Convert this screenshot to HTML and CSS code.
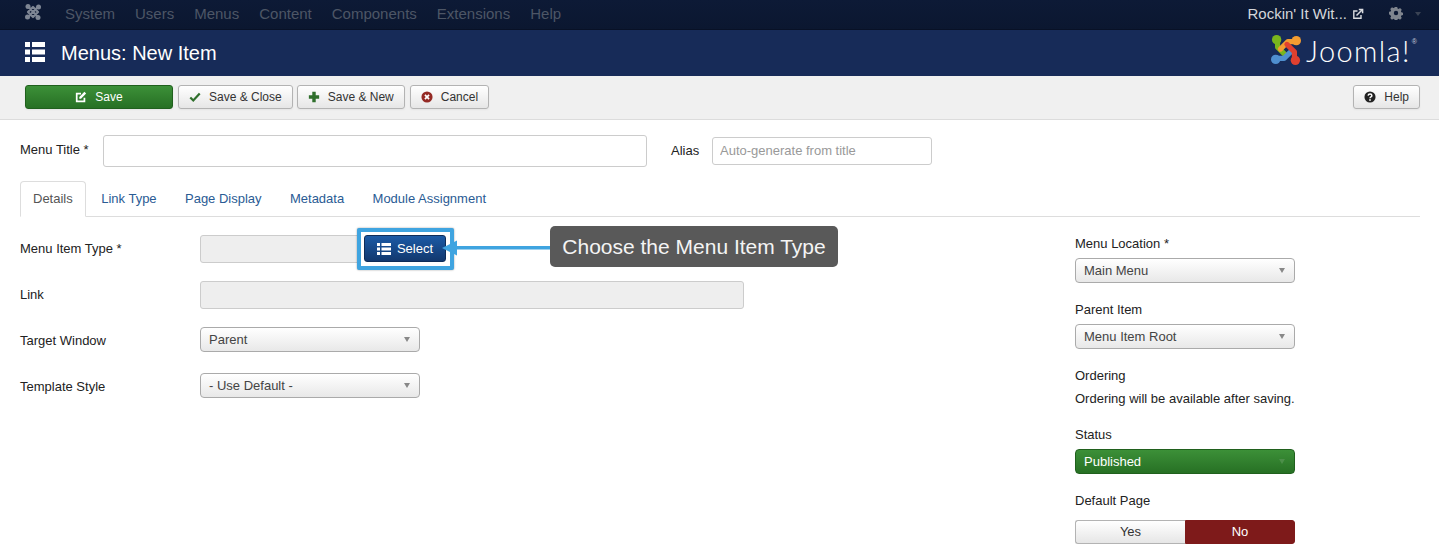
FILE: index.html
```html
<!DOCTYPE html>
<html lang="en">
<head>
<meta charset="utf-8">
<title>Menus: New Item</title>
<link rel="stylesheet" href="styles.css">
</head>
<body>
<nav class="nav">
  <svg class="nav-logo" viewBox="0 0 32 32">
    <g fill="none" stroke="#7e8694" stroke-width="4.500" stroke-linecap="round" stroke-linejoin="round">
      <path d="M6 5 L27 27 M27 5 L5 27 M16 6 L26 16 L16 26 L6 16 Z"/>
    </g>
    <g fill="#7e8694"><circle cx="6" cy="5" r="5"/><circle cx="27" cy="6" r="5"/><circle cx="26" cy="27" r="5"/><circle cx="5" cy="26" r="5"/></g>
  </svg>
  <ul class="nav-menu">
    <li>System</li><li>Users</li><li>Menus</li><li>Content</li><li>Components</li><li>Extensions</li><li>Help</li>
  </ul>
  <div class="nav-right">
    <span class="site">Rockin' It Wit...</span>
    <svg class="ext" viewBox="0 0 12 12"><path d="M9 7 V10.2 H1.800 V3 H5.500" fill="none" stroke="#d8dade" stroke-width="1.400"/><path d="M4.500 7.500 L10 2 M6.800 1.500 H10.600 V5.200" fill="none" stroke="#d8dade" stroke-width="1.500"/></svg>
    <svg class="gear" viewBox="0 0 16 16"><path fill="#7f858e" fill-rule="evenodd" d="M6.600 1h2.800l.4 1.900 1.200.5 1.600-1 2 2-1 1.600.5 1.200 1.900.4v2.800l-1.900.4-.5 1.200 1 1.600-2 2-1.600-1-1.200.5-.4 1.900H6.600l-.4-1.900-1.200-.5-1.600 1-2-2 1-1.600-.5-1.200L0 9.400V6.600l1.900-.4.5-1.200-1-1.600 2-2 1.600 1 1.200-.5zM8 5.500a2.500 2.500 0 1 0 0 5 2.500 2.500 0 0 0 0-5z"/></svg>
    <span class="caret"></span>
  </div>
</nav>
<header class="header">
  <svg class="title-icon" viewBox="0 0 20 20"><path fill="#fff" d="M0 0h5v5H0zM7 0h13v5H7zM0 7.500h5v5H0zM7 7.500h13v5H7zM0 15h5v5H0zM7 15h13v5H7z"/></svg>
  <h1 class="title">Menus: New Item</h1>
  <div class="brand">
    <svg class="brand-mark" viewBox="0 0 32 32">
      <g fill="none" stroke-width="5.500" stroke-linecap="round" stroke-linejoin="round">
        <path d="M7 6 L7 13 L15 21" stroke="#7ab51d"/>
        <path d="M26 7 L18 7 L10 15" stroke="#f39c31"/>
        <path d="M6 25 L14 25 L22 17" stroke="#4f8fcf"/>
        <path d="M25 26 L25 18 L17 10" stroke="#e0402f"/>
      </g>
      <circle cx="6" cy="5" r="5" fill="#7ab51d"/>
      <circle cx="27" cy="6" r="5" fill="#f39c31"/>
      <circle cx="26" cy="27" r="5" fill="#e0402f"/>
      <circle cx="5" cy="26" r="5" fill="#4f8fcf"/>
    </svg>
    <span class="brand-name">Joomla!</span><span class="brand-reg">®</span>
  </div>
</header>
<div class="toolbar">
  <button class="btn btn-save" type="button">
    <svg class="ico" viewBox="0 0 14 14"><path d="M11 8v4H2V3h5" fill="none" stroke="#fff" stroke-width="2"/><path d="M5 7l6-6 2 2-6 6H5z" fill="#fff"/></svg>Save
  </button>
  <button class="btn" type="button">
    <svg class="ico" viewBox="0 0 14 14"><path d="M1.500 7.500l3.500 3.500 7.500-8" fill="none" stroke="#2f6f2c" stroke-width="2.600"/></svg>Save &amp; Close
  </button>
  <button class="btn" type="button">
    <svg class="ico" viewBox="0 0 14 14"><path d="M5 1h4v4h4v4H9v4H5V9H1V5h4z" fill="#2f6f2c"/></svg>Save &amp; New
  </button>
  <button class="btn btn-cancel" type="button">
    <svg class="ico" viewBox="0 0 14 14"><circle cx="7" cy="7" r="6.500" fill="#942a25"/><path d="M4.600 4.600l4.800 4.800M9.400 4.600l-4.800 4.800" stroke="#fff" stroke-width="2"/></svg>Cancel
  </button>
  <button class="btn btn-help" type="button">
    <svg class="ico" viewBox="0 0 14 14"><circle cx="7" cy="7" r="6.500" fill="#222"/><path d="M4.800 5.400C5 3 9.200 3 9.200 5.400 9.200 7 7 6.800 7 8.400" fill="none" stroke="#fff" stroke-width="1.700"/><path d="M6 9.600h2v1.800H6z" fill="#fff"/></svg>Help
  </button>
</div>
<main class="content">
  <div class="title-row">
    <label class="label-title">Menu Title *</label>
    <input class="input input-title" type="text">
    <label class="label-alias">Alias</label>
    <input class="input input-alias" type="text" placeholder="Auto-generate from title">
  </div>
  <ul class="tabs">
    <li class="tab active">Details</li>
    <li class="tab tab-first">Link Type</li>
    <li class="tab">Page Display</li>
    <li class="tab">Metadata</li>
    <li class="tab">Module Assignment</li>
  </ul>
  <div class="columns">
    <div class="main-col">
      <div class="row row-type">
        <label class="row-label">Menu Item Type *</label>
        <div class="field-type">
          <div class="readonly readonly-short"></div>
          <span class="ring"></span>
          <button class="btn-select" type="button">
            <svg class="ico-select" viewBox="0 0 14 14"><path fill="#fff" d="M0 1h3v3H0zM4.500 1H14v3H4.500zM0 5.500h3v3H0zM4.500 5.500H14v3H4.500zM0 10h3v3H0zM4.500 10H14v3H4.500z"/></svg>Select
          </button>
          <svg class="arrow" viewBox="0 0 110 16"><path d="M0 8 L15 0.500 L15 6 L110 6 L110 9.500 L15 9.500 L15 15.500 Z" fill="#3fa4e0"/></svg>
          <div class="callout">Choose the Menu Item Type</div>
        </div>
      </div>
      <div class="row">
        <label class="row-label">Link</label>
        <div class="readonly readonly-long"></div>
      </div>
      <div class="row">
        <label class="row-label">Target Window</label>
        <div class="select">Parent</div>
      </div>
      <div class="row">
        <label class="row-label">Template Style</label>
        <div class="select">- Use Default -</div>
      </div>
    </div>
    <aside class="side-col">
      <div class="side-label">Menu Location *</div>
      <div class="select">Main Menu</div>
      <div class="side-label">Parent Item</div>
      <div class="select">Menu Item Root</div>
      <div class="side-label">Ordering</div>
      <div class="side-text">Ordering will be available after saving.</div>
      <div class="side-label">Status</div>
      <div class="select select-green">Published</div>
      <div class="side-label">Default Page</div>
      <div class="toggle"><span class="toggle-yes">Yes</span><span class="toggle-no">No</span></div>
    </aside>
  </div>
</main>
</body>
</html>
```
FILE: styles.css
```css
* { box-sizing: border-box; }
html, body { margin: 0; padding: 0; }
body { font-family: "Liberation Sans", Arial, sans-serif; font-size: 13px; color: #333; background: #fff; overflow: hidden; }
ul { list-style: none; margin: 0; padding: 0; }

.nav { height: 30px; background: linear-gradient(#0d1a36, #0b1730); border-bottom: 1px solid #081126; display: flex; align-items: center; padding: 0 18px 0 25px; }
.nav-logo { width: 16px; height: 16px; margin: -6px 24px 0 0; }
.nav-menu { display: flex; gap: 20px; font-size: 15px; color: #4d5666; margin-top: -2px; }
.nav-right { margin-left: auto; display: flex; align-items: center; color: #d4d6da; font-size: 15px; margin-top: -2px; }
.ext { width: 12px; height: 12px; margin-left: 5px; }
.gear { width: 14px; height: 14px; margin-left: 25px; margin-top: -2px; }
.caret { width: 0; height: 0; margin-left: 12px; border: 3px solid transparent; border-top: 4px solid #3a4354; border-bottom: 0; }

.header { height: 46px; background: #172b58; display: flex; align-items: center; padding: 0 22px 0 25px; }
.title-icon { width: 20px; height: 20px; margin: -2px 16px 0 0; }
.title { margin: 0; font-size: 20px; font-weight: 400; color: #fff; }
.brand { margin-left: auto; display: flex; align-items: center; margin-top: -6px; }
.brand-mark { width: 30px; height: 30px; margin-right: 5px; }
.brand-name { font-family: Lato, sans-serif; font-weight: 300; font-size: 29px; letter-spacing: 1.400px; color: #fff; }
.brand-reg { font-size: 7px; color: #ccd; align-self: flex-start; margin: 5px 0 0 1px; }

.toolbar { height: 44px; background: #f0f0f0; border-bottom: 1px solid #dcdcdc; display: flex; align-items: flex-start; gap: 4px; padding: 9px 19px 0 25px; }
.btn { height: 24px; padding: 0 10px; font: 12px "Liberation Sans", Arial, sans-serif; color: #333; background: linear-gradient(#fff, #e6e6e6); border: 1px solid #b3b3b3; border-radius: 3px; box-shadow: 0 1px 2px rgba(0,0,0,.05); display: flex; align-items: center; justify-content: center; white-space: nowrap; }
.ico { width: 12px; height: 12px; margin-right: 8px; }
.btn-save { width: 148px; margin-right: 1px; color: #fff; background: linear-gradient(#3c9038, #277024); border-color: #20601d; }
.btn-cancel { margin-left: 1px; }
.btn-help { margin-left: auto; }

.content { padding: 0 19px 0 20px; }
.title-row { display: flex; align-items: center; height: 32px; margin-top: 15px; }
.label-title { width: 83px; color: #222; padding-bottom: 3px; }
.label-alias { width: 41px; margin-left: 24px; color: #222; padding-bottom: 1px; }
.input { border: 1px solid #ccc; border-radius: 3px; background: #fff; font: 13px "Liberation Sans", Arial, sans-serif; padding: 0 7px; }
.input::placeholder { color: #999; opacity: 1; }
.input-title { width: 544px; height: 32px; }
.input-alias { width: 220px; height: 28px; padding-bottom: 2px; }

.tabs { display: flex; height: 36px; margin-top: 14px; border-bottom: 1px solid #ddd; }
.tab { height: 36px; line-height: 34px; padding: 0 13.200px; border: 1px solid transparent; border-radius: 4px 4px 0 0; color: #2a5b94; }
.tab.active { width: 66px; padding: 0 12px; color: #555; background: #fff; border-color: #ddd #ddd #fff; }
.tab-first { margin-left: 1px; }

.columns { display: flex; justify-content: space-between; padding-top: 18px; }
.main-col { width: 724px; }
.row { display: flex; align-items: flex-start; height: 46px; }
.row-label { width: 180px; line-height: 27px; color: #222; }
.field-type { position: relative; width: 544px; height: 28px; display: flex; }
.readonly { height: 28px; background: #eee; border: 1px solid #ccc; border-radius: 3px; }
.readonly-short { width: 170px; }
.readonly-long { width: 544px; }
.btn-select { position: absolute; left: 164px; top: 0; width: 82px; height: 27px; padding: 0; background: linear-gradient(#1b5aa6, #12386e); border: 1px solid #0e2c58; border-radius: 3px; color: #fff; font: 13px "Liberation Sans", Arial, sans-serif; display: flex; align-items: center; justify-content: center; }
.ico-select { width: 14px; height: 14px; margin-right: 6px; }
.ring { position: absolute; left: 157px; top: -7px; width: 97px; height: 42px; background: #fff; border: 4px solid #3fa4e0; box-shadow: 0 0 2px rgba(0,0,0,.4); border-radius: 2px; }
.arrow { position: absolute; left: 242px; top: 5px; width: 110px; height: 16px; }
.callout { position: absolute; left: 350px; top: -9px; width: 288px; height: 41px; background: #595959; border-radius: 5px; color: #f4f4f4; font-size: 21px; line-height: 42px; text-align: center; white-space: nowrap; }

.select { width: 220px; height: 25px; line-height: 23px; padding: 0 8px; color: #444; background: linear-gradient(#fff, #e8e8e8); border: 1px solid #aaa; border-radius: 4px; position: relative; }
.select::after { content: ""; position: absolute; right: 9px; top: 9px; border: 3.500px solid transparent; border-top: 5px solid #888; border-bottom: 0; }
.select-green { color: #fff; background: linear-gradient(#3c9038, #277024); border-color: #20601d; }
.select-green::after { border-top-color: #4d8f4a; }

.side-col { width: 345px; }
.side-label { height: 16px; line-height: 18px; color: #222; margin: 18px 0 7px; }
.side-label:first-child { margin-top: 0; }
.side-text { height: 16px; line-height: 18px; color: #222; margin-bottom: 20px; }
.side-text + .side-label { margin-top: 0; }
.toggle { display: flex; width: 220px; height: 24px; line-height: 22px; text-align: center; margin-top: 12px; }
.toggle-yes { width: 110px; background: linear-gradient(#fff, #e6e6e6); border: 1px solid #b3b3b3; border-right: 0; border-radius: 3px 0 0 3px; color: #333; }
.toggle-no { width: 110px; background: #7e1a1a; border: 1px solid #7e1a1a; border-radius: 0 3px 3px 0; color: #fff; }
```
